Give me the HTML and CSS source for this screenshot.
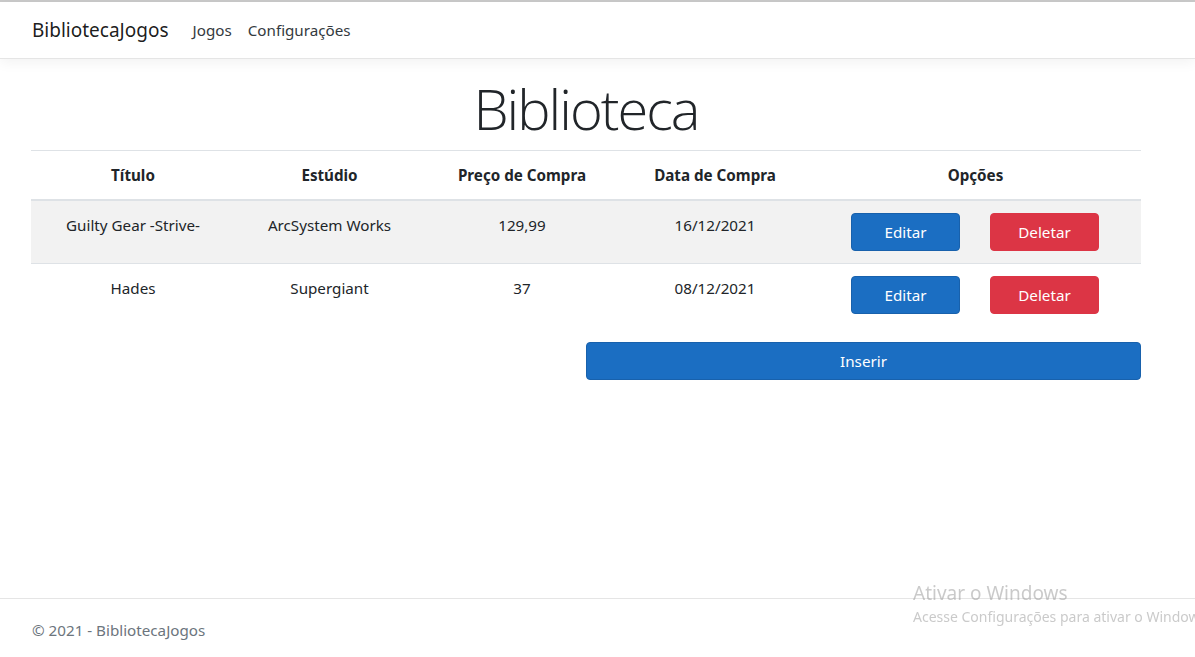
FILE: index.html
```html
<!DOCTYPE html>
<html lang="pt-br">
<head>
<meta charset="utf-8">
<title>Biblioteca - BibliotecaJogos</title>
<link rel="stylesheet" href="styles.css">
</head>
<body>
<div class="page">
  <header class="navbar">
    <div class="container nav-inner">
      <a class="brand" href="#">BibliotecaJogos</a>
      <nav class="nav">
        <a class="nav-link" href="#">Jogos</a>
        <a class="nav-link" href="#">Configurações</a>
      </nav>
    </div>
  </header>
  <main class="container main">
    <h1 class="display">Biblioteca</h1>
    <table class="table">
      <colgroup>
        <col class="c1"><col class="c2"><col class="c3"><col class="c4"><col class="c5">
      </colgroup>
      <thead>
        <tr>
          <th>Título</th>
          <th>Estúdio</th>
          <th>Preço de Compra</th>
          <th>Data de Compra</th>
          <th>Opções</th>
        </tr>
      </thead>
      <tbody>
        <tr class="odd">
          <td>Guilty Gear -Strive-</td>
          <td>ArcSystem Works</td>
          <td>129,99</td>
          <td>16/12/2021</td>
          <td><div class="opts"><a class="btn btn-primary btn-opt" href="#">Editar</a><a class="btn btn-danger btn-opt" href="#">Deletar</a></div></td>
        </tr>
        <tr>
          <td>Hades</td>
          <td>Supergiant</td>
          <td>37</td>
          <td>08/12/2021</td>
          <td><div class="opts"><a class="btn btn-primary btn-opt" href="#">Editar</a><a class="btn btn-danger btn-opt" href="#">Deletar</a></div></td>
        </tr>
      </tbody>
    </table>
    <div class="insert-row">
      <a class="btn btn-primary btn-insert" href="#">Inserir</a>
    </div>
  </main>
  <footer class="footer">
    <div class="container">© 2021 - BibliotecaJogos</div>
  </footer>
</div>
<div class="watermark">
  <div class="wm-title">Ativar o Windows</div>
  <div class="wm-sub">Acesse Configurações para ativar o Windows.</div>
</div>
</body>
</html>
```

FILE: styles.css
```css
* { box-sizing: border-box; }
html, body { margin: 0; height: 100%; }
body {
  font-family: "Noto Sans", "Open Sans", Roboto, sans-serif;
  font-size: 15.2px;
  line-height: 24px;
  color: #212529;
  background: #fff;
  overflow: hidden;
}
a { text-decoration: none; }
.page {
  min-height: 100vh;
  display: flex;
  flex-direction: column;
  border-top: 2px solid #c9c9c9;
}
.container {
  width: 1140px;
  padding: 0 15px;
  margin-left: 16px;
}
.navbar {
  height: 57px;
  border-bottom: 1px solid #e5e5e5;
  box-shadow: 0 4px 12px rgba(0,0,0,.05);
  margin-bottom: 16px;
  background: #fff;
}
.nav-inner {
  height: 56px;
  display: flex;
  align-items: center;
}
.brand {
  font-size: 19px;
  color: rgba(0,0,0,.9);
  margin-right: 16px;
  padding-left: 1px;
}
.nav { display: flex; }
.nav-link {
  color: #343a40;
  padding: 8px;
  font-size: 15.2px;
}
.main { flex: 1; }
.display {
  font-family: "Open Sans", "Noto Sans", sans-serif;
  font-size: 56px;
  font-weight: 300;
  line-height: 1.2;
  letter-spacing: -2px;
  margin: 0 0 8px;
  text-align: center;
  color: #212529;
}
.table {
  width: 1110px;
  border-collapse: collapse;
  table-layout: fixed;
  margin-bottom: 16px;
}
.c1 { width: 204px; }
.c2 { width: 189px; }
.c3 { width: 196px; }
.c4 { width: 190px; }
.c5 { width: 331px; }
.table th, .table td {
  padding: 12px;
  text-align: center;
  vertical-align: top;
  border-top: 1px solid #dee2e6;
}
.table th { font-weight: 700; }
.table thead th { border-bottom: 2px solid #dee2e6; }
.table tbody tr.odd { background: #f2f2f2; }
.opts {
  display: flex;
  justify-content: center;
  gap: 30px;
  margin-left: -1px;
}
.btn {
  display: inline-block;
  color: #fff;
  text-align: center;
  border: 1px solid transparent;
  border-radius: 4px;
  padding: 6px 12px;
  font-size: 15.2px;
  line-height: 24px;
}
.btn-primary { background: #1b6ec2; border-color: #1861ac; }
.btn-danger { background: #dc3545; border-color: #dc3545; }
.btn-opt { width: 109px; }
.insert-row {
  display: flex;
  justify-content: flex-end;
}
.btn-insert { width: 555px; }
.footer {
  border-top: 1px solid #e5e5e5;
  height: 59px;
  line-height: 62px;
  color: #6c757d;
  white-space: nowrap;
}
.footer .container { padding-left: 16px; }
.watermark {
  position: fixed;
  left: 913px;
  top: 580px;
  color: rgba(150,150,150,.5);
  white-space: nowrap;
  font-family: "Noto Sans", sans-serif;
}
.wm-title { font-size: 19px; line-height: 26px; }
.wm-sub { font-size: 14px; line-height: 22px; }
```
